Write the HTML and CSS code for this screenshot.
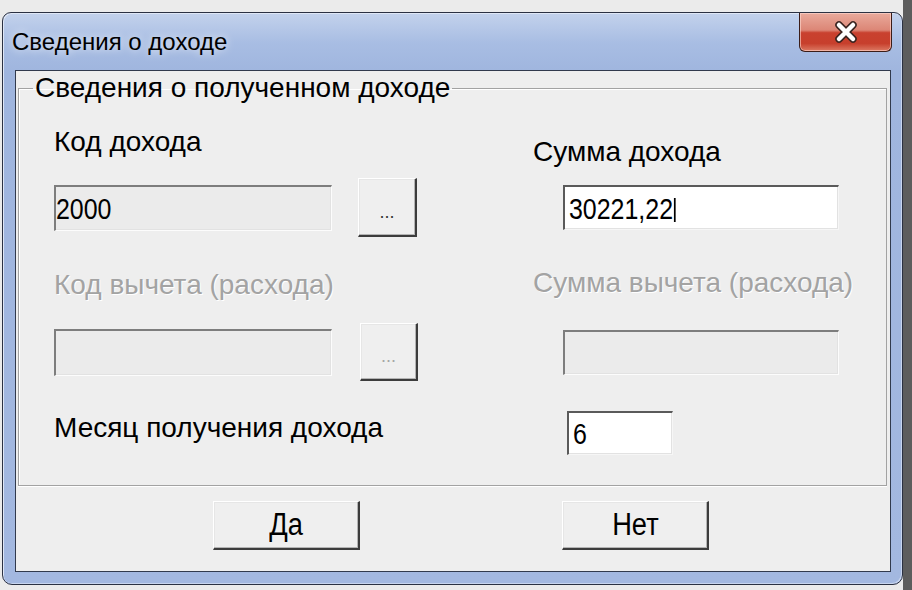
FILE: index.html
```html
<!DOCTYPE html>
<html lang="ru">
<head>
    <meta charset="UTF-8" />
    <title>Сведения о доходе</title>
    <link rel="stylesheet" href="styles.css">
</head>
<body>
    <div class="window">
        <div class="titlebar">
            <span class="title">Сведения о доходе</span>
            <button class="close" title="Закрыть">
                <svg width="26" height="22" viewBox="0 0 26 22">
                    <path d="M6 4 L20 18 M20 4 L6 18" stroke="#3a2420" stroke-width="7.5" stroke-linecap="round" fill="none" />
                    <path d="M6 4 L20 18 M20 4 L6 18" stroke="#fff" stroke-width="4.5" stroke-linecap="round" fill="none" />
                </svg>
            </button>
        </div>

        <div class="client">
            <fieldset class="group">
                <legend>Сведения о полученном доходе</legend>
                <div class="fields">
                    <div class="label">Код дохода</div>
                    <div class="label label-right">Сумма дохода</div>

                    <div class="pick">
                        <div class="edit edit-code readonly"><span class="value">2000</span></div>
                        <button class="dots">...</button>
                    </div>
                    <div class="edit edit-sum"><span class="value">30221,22<span class="caret"></span></span></div>

                    <div class="label disabled label-r3">Код вычета (расхода)</div>
                    <div class="label disabled label-r3-right">Сумма вычета (расхода)</div>

                    <div class="pick pick-second">
                        <div class="edit edit-code readonly"></div>
                        <button class="dots" disabled>...</button>
                    </div>
                    <div class="edit edit-sum readonly"></div>

                    <div class="label label-r5">Месяц получения дохода</div>
                    <div class="edit edit-month"><span class="value">6</span></div>
                </div>
            </fieldset>

            <div class="actions">
                <button class="btn"><span class="value">Да</span></button>
                <button class="btn"><span class="value">Нет</span></button>
            </div>
        </div>
    </div>
</body>
</html>
```

FILE: styles.css
```css
* {
    margin: 0;
    padding: 0;
    box-sizing: border-box;
}

body {
    width: 912px;
    height: 590px;
    overflow: hidden;
    font-family: 'Liberation Sans', Arial, sans-serif;
    background: linear-gradient(to right, #ebebeb 903px, #5d5d5d 903px);
    padding: 12px 0 0 2px;
}

/* окно в стиле Windows 7 */
.window {
    width: 901px;
    height: 573px;
    border: 1px solid #2b3142;
    border-radius: 9px 9px 10px 10px;
    background: linear-gradient(to bottom, #c3d2ec 0, #a8bde3 30px, #9fb5de 60px, #a3b8e0 100%);
    box-shadow: inset 1px 1px 0 #dfe7f6, inset -1px -1px 0 #c8d5ee;
    padding: 0 11px 12px 12px;
    display: flex;
    flex-direction: column;
}

.titlebar {
    height: 57px;
    display: flex;
    align-items: flex-start;
    justify-content: space-between;
}

.title {
    margin-top: 15px;
    margin-left: -3px;
    font-size: 24px;
    color: #000;
    text-shadow: 0 0 8px rgba(255, 255, 255, 0.9);
}

.close {
    width: 93px;
    height: 39px;
    margin-right: -1px;
    border: 1px solid #3b1d18;
    border-top: none;
    border-radius: 0 0 6px 6px;
    background: linear-gradient(to bottom, #e9aa9c 0, #dc8676 45%, #c9412f 52%, #c73f2c 80%, #dc7a64 100%);
    box-shadow: inset 0 0 0 1px rgba(255, 220, 210, 0.6);
    display: flex;
    align-items: center;
    justify-content: center;
    cursor: pointer;
}

.client {
    flex: 1;
    border: 1px solid #313a4d;
    background: #eeeeee;
    display: flex;
    flex-direction: column;
}

.group {
    margin: 4px 3px 0 2px;
    border: 1px solid #a2a2a2;
    box-shadow: inset 1px 1px 0 #fff, 0 1px 0 #fff;
    padding: 0 0 25px 0;
}

.group legend {
    margin-left: 14px;
    padding: 0 2px;
    font-size: 28px;
    line-height: 26px;
    color: #000;
}

.fields {
    display: grid;
    grid-template-columns: 479px 1fr;
    grid-template-rows: 52px 59px 86px 58px 79px;
    padding: 25px 0 0 35px;
}

.label {
    font-size: 28px;
    line-height: 32px;
    color: #000;
    white-space: nowrap;
}

.label-right { margin-top: 10px; }
.label-r3 { margin-top: 32px; }
.label-r3-right { margin-top: 30px; }
.label-r5 { margin-top: 31px; }

.label.disabled {
    color: #a3a3a3;
    text-shadow: 1px 1px 0 #fff;
}

.pick {
    display: flex;
    align-items: center;
    gap: 26px;
}

.pick-second { gap: 28px; }

/* поля ввода */
.edit {
    height: 45px;
    border-style: solid;
    border-width: 2px 1px 1px 2px;
    border-color: #5a5a5a #f6f6f6 #f6f6f6 #5a5a5a;
    box-shadow: inset -1px -1px 0 #e2e2e2;
    background: #fff;
    display: flex;
    align-items: center;
    padding: 2px 2px 0 4px;
    font-size: 29px;
    color: #000;
}

/* узкий шрифт как в старых диалогах */
.value {
    display: inline-block;
    transform: scaleX(0.86);
    transform-origin: left center;
    white-space: nowrap;
}

.edit.readonly {
    background: #ebebeb;
    border-color: #7d7d7d #fcfcfc #fcfcfc #7d7d7d;
}

.edit-code {
    width: 278px;
    height: 46px;
    padding-left: 0;
}

.pick-second .edit-code { height: 47px; }

.edit-sum {
    width: 276px;
    margin-left: 30px;
    align-self: center;
}

.edit-month {
    width: 106px;
    height: 44px;
    margin: 30px 0 0 34px;
    align-self: start;
}

.caret {
    display: inline-block;
    width: 2px;
    height: 24px;
    background: #000;
    margin-left: 1px;
    vertical-align: -3px;
}

.dots {
    width: 59px;
    height: 59px;
    font-family: 'Liberation Sans', sans-serif;
    font-size: 18px;
    color: #333;
    padding-top: 10px;
    background: #efefef;
    border-style: solid;
    border-width: 1px 2px 2px 1px;
    border-color: #fff #3c3c3c #3c3c3c #fff;
    box-shadow: inset -1px -1px 0 #b4b4b4, inset 1px 1px 0 #e6e6e6;
}

.pick-second .dots { height: 58px; width: 58px; }

.dots:disabled {
    color: #a6a6a6;
}

.actions {
    display: flex;
    gap: 202px;
    padding: 15px 0 0 197px;
}

.btn {
    width: 147px;
    height: 49px;
    font-family: 'Liberation Sans', sans-serif;
    font-size: 31px;
    color: #000;
    background: #efefef;
    border-style: solid;
    border-width: 1px 2px 2px 1px;
    border-color: #fff #3c3c3c #3c3c3c #fff;
    box-shadow: inset -1px -1px 0 #b4b4b4, inset 1px 1px 0 #e6e6e6;
    cursor: pointer;
}

.btn .value {
    transform: scaleX(0.88);
    transform-origin: center;
}
```
